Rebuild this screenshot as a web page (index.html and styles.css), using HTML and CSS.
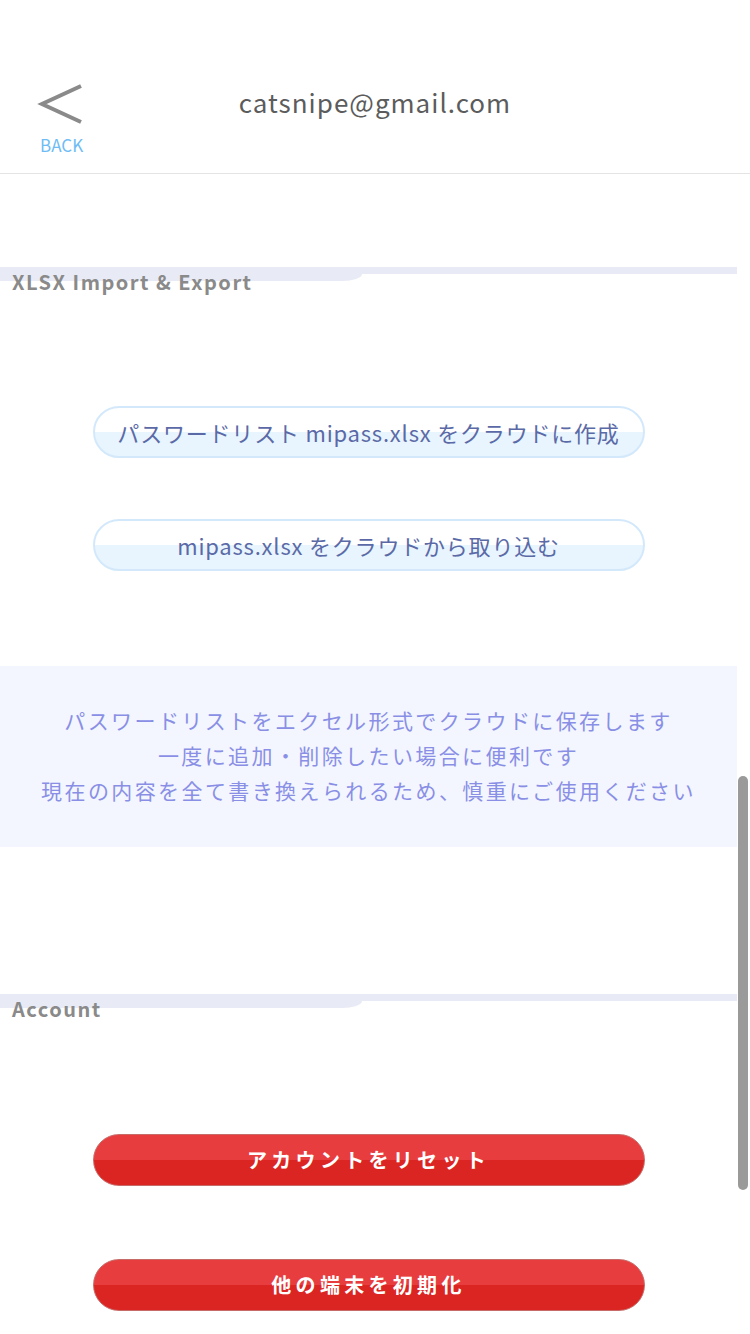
FILE: index.html
```html
<!DOCTYPE html>
<html lang="ja">
<head>
<meta charset="utf-8">
<title>Settings</title>
<link rel="stylesheet" href="styles.css">
</head>
<body>
<div class="page">
  <header class="topbar">
    <div class="back">
      <svg class="back-icon" width="48" height="44" viewBox="0 0 48 44">
        <polyline points="44,4 5,22 44,40" fill="none" stroke="#8a8a8a" stroke-width="4"/>
      </svg>
      <span class="back-label">BACK</span>
    </div>
    <h1 class="title">catsnipe@gmail.com</h1>
    <div></div>
  </header>

  <main class="content">
    <section class="section section-xlsx">
      <h2 class="sec-head"><span class="sec-text">XLSX Import &amp; Export</span></h2>
      <div class="btn-list">
        <button class="btn btn-light">パスワードリスト mipass.xlsx をクラウドに作成</button>
        <button class="btn btn-light">mipass.xlsx をクラウドから取り込む</button>
      </div>
      <div class="info">
        <p>パスワードリストをエクセル形式でクラウドに保存します</p>
        <p>一度に追加・削除したい場合に便利です</p>
        <p>現在の内容を全て書き換えられるため、慎重にご使用ください</p>
      </div>
    </section>

    <section class="section section-account">
      <h2 class="sec-head"><span class="sec-text">Account</span></h2>
      <div class="btn-list btn-list-red">
        <button class="btn btn-red">アカウントをリセット</button>
        <button class="btn btn-red">他の端末を初期化</button>
      </div>
    </section>
  </main>

  <div class="scroll-thumb"></div>
</div>
</body>
</html>
```

FILE: styles.css
```css
html, body {
  margin: 0;
  padding: 0;
  height: 1334px;
  overflow: hidden;
  background: #ffffff;
}

body {
  font-family: "Noto Sans CJK JP", "Noto Sans", sans-serif;
}

.page {
  position: relative;
  width: 750px;
  height: 1334px;
  overflow: hidden;
}

/* ---------- header ---------- */
.topbar {
  box-sizing: border-box;
  height: 174px;
  padding-top: 82px;
  border-bottom: 1px solid #e4e4e4;
  display: grid;
  grid-template-columns: 1fr auto 1fr;
  align-items: start;
}

.back {
  display: flex;
  flex-direction: column;
  align-items: flex-start;
  padding-left: 37px;
}

.back-icon {
  display: block;
}

.back-label {
  margin-top: 9px;
  margin-left: 3px;
  font-size: 17px;
  line-height: 20px;
  color: #6ebcf5;
}

.title {
  margin: 2px 0 0;
  font-size: 26px;
  line-height: 36px;
  font-weight: 400;
  color: #5c5c5c;
  letter-spacing: 1px;
}

/* ---------- content ---------- */
.content {
  width: 737px;
}

.section-xlsx {
  margin-top: 93px;
}

.section-account {
  margin-top: 147px;
}

.sec-head {
  position: relative;
  margin: 0;
  padding: 1px 0 0 12px;
  height: 28px;
  font-size: 20px;
  line-height: 28px;
  font-weight: 700;
  color: #8a8a8a;
  letter-spacing: 1.5px;
}

.sec-head::before {
  content: "";
  position: absolute;
  left: 0;
  top: 0;
  width: 737px;
  height: 7px;
  background: #e8eaf5;
}

.sec-head::after {
  content: "";
  position: absolute;
  left: 0;
  top: 7px;
  width: 362px;
  height: 7px;
  background: #e8eaf5;
  border-bottom-right-radius: 20px 7px;
}

.sec-text {
  position: relative;
  z-index: 1;
}

.btn-list {
  display: flex;
  flex-direction: column;
  align-items: center;
  gap: 61px;
  margin-top: 110px;
}

.btn-list-red {
  margin-top: 111px;
  gap: 73px;
}

.btn {
  box-sizing: border-box;
  width: 552px;
  height: 52px;
  margin: 0;
  padding: 0;
  border-radius: 26px;
  font-family: "Noto Sans CJK JP", "Noto Sans", sans-serif;
  display: flex;
  align-items: center;
  justify-content: center;
}

.btn-light {
  border: 2px solid #d3e9fb;
  background: linear-gradient(#ffffff 0, #ffffff 50%, #e8f5fe 50%, #e8f5fe 100%);
  color: #5b6aa7;
  font-size: 22px;
  line-height: 30px;
  letter-spacing: 0.8px;
}

.btn-red {
  border: 1px solid #c76b68;
  background: linear-gradient(#e83d3f 0, #e83d3f 50%, #db2522 50%, #db2522 100%);
  color: #ffffff;
  font-size: 20px;
  line-height: 30px;
  font-weight: 700;
  letter-spacing: 4.3px;
}

.info {
  margin-top: 95px;
  box-sizing: border-box;
  height: 181px;
  padding-top: 37px;
  background: #f3f6fe;
  text-align: center;
  color: #8a8fe6;
  font-size: 21px;
  line-height: 35px;
  letter-spacing: 2.4px;
}

.info p {
  margin: 0;
}

/* scrollbar overlay */
.scroll-thumb {
  position: absolute;
  left: 738px;
  top: 776px;
  width: 10px;
  height: 414px;
  border-radius: 5px;
  background: #9a9a9a;
}
```
